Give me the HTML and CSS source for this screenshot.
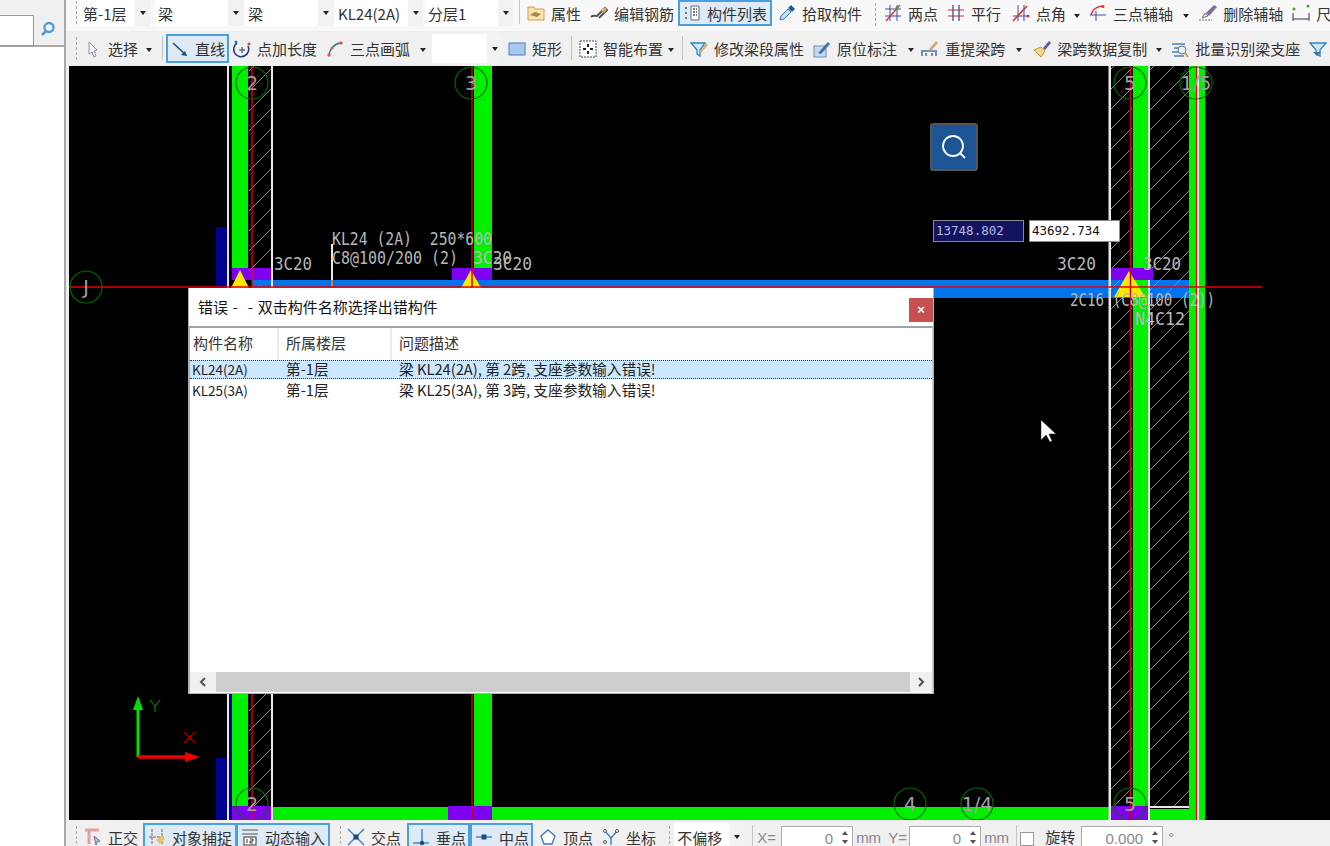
FILE: index.html
```html
<!DOCTYPE html>
<html lang="zh-CN">

<head>
    <meta charset="UTF-8">
    <title>梁 绘图</title>
    <link rel="stylesheet" href="styles.css">
</head>

<body>
    <div class="app">
        <div class="side">
            <div class="searchRow">
                <div class="searchInput"></div>
                <div class="searchBtn">
                    <svg width="18" height="18" viewBox="0 0 18 18"><circle cx="10" cy="7.500" r="4.500" fill="none" stroke="#4f9fe0" stroke-width="2.400"/><path d="M7 11l-4 4" stroke="#4f9fe0" stroke-width="2.600"/></svg>
                </div>
            </div>
        </div>

        <div class="main">
            <div class="bar barTop">
                <i class="grip gripCombos"></i>
                <div class="combo comboFloor"><span>第-1层</span><b><i class="caret"></i></b></div>
                <div class="combo"><span>梁</span><b><i class="caret"></i></b></div>
                <div class="combo"><span>梁</span><b><i class="caret"></i></b></div>
                <div class="combo"><span>KL24(2A)</span><b><i class="caret"></i></b></div>
                <div class="combo"><span>分层1</span><b><i class="caret"></i></b></div>
                <i class="sep sepAttr"></i>
                <div class="tool">
                    <svg class="icon" viewBox="0 0 18 18"><path d="M1 3h6l1 2h9v11H1z" fill="#f6e3b4" stroke="#d99a4a"/><path d="M3 11l5-3 6 2-4 3z" fill="#a98a3a"/></svg>
                    <span>属性</span>
                </div>
                <div class="tool">
                    <svg class="icon" viewBox="0 0 18 18"><path d="M1 13c2-2 4-1 6-1l8-8 2 2-8 8" fill="none" stroke="#555" stroke-width="2"/><path d="M11 6l3-3 3 2-3 4z" fill="#d8b070"/></svg>
                    <span>编辑钢筋</span>
                </div>
                <div class="tool toolOn">
                    <svg class="icon" viewBox="0 0 18 18"><path d="M8 2h8v14H8z" fill="#fff" stroke="#667"/><path d="M10 5h4M10 8h4M10 11h4M2 4h3M2 9h3M2 14h3" stroke="#456" stroke-width="1.500" stroke-dasharray="2 1"/></svg>
                    <span>构件列表</span>
                </div>
                <div class="tool toolPick">
                    <svg class="icon" viewBox="0 0 18 18"><path d="M2 16l1-4 7-7 3 3-7 7z" fill="#bfe0f5" stroke="#3579b8"/><path d="M10 4l3-3 4 4-3 3z" fill="#26588f"/></svg>
                    <span>拾取构件</span>
                </div>
                <i class="grip gripAxis"></i>
                <div class="tool">
                    <svg class="icon" viewBox="0 0 18 18"><path d="M1 5h16M1 12h16" stroke="#3d4f9a"/><path d="M6 1v16M13 1v16" stroke="#3d4f9a"/><path d="M2 17L16 1" stroke="#d33" stroke-width="1.300"/><circle cx="13" cy="4" r="1.500" fill="#3a3"/></svg>
                    <span>两点</span>
                </div>
                <div class="tool">
                    <svg class="icon" viewBox="0 0 18 18"><path d="M1 6h16M1 12h16" stroke="#c33"/><path d="M6 1v16M12 1v16" stroke="#3d4f9a" stroke-width="1.300"/></svg>
                    <span>平行</span>
                </div>
                <div class="tool toolAngle">
                    <svg class="icon" viewBox="0 0 18 18"><path d="M1 12h14M6 1v16M12 1v16" stroke="#3d4f9a"/><path d="M1 17L15 2" stroke="#d33" stroke-width="1.600"/><circle cx="16" cy="12" r="1.500" fill="#d33"/></svg>
                    <span>点角</span>
                </div>
                <i class="caret caretTool"></i>
                <div class="tool">
                    <svg class="icon" viewBox="0 0 18 18"><path d="M1 11h16M7 7v10" stroke="#3d4f9a"/><path d="M2 11c1-5 5-8 11-9" fill="none" stroke="#d33" stroke-width="1.500"/><circle cx="14" cy="2.500" r="1.500" fill="#d33"/></svg>
                    <span>三点辅轴</span>
                </div>
                <i class="caret caretAxis"></i>
                <div class="tool">
                    <svg class="icon" viewBox="0 0 18 18"><path d="M0 16h13" stroke="#678" stroke-dasharray="2 1"/><path d="M3 14l3-5 3 3z" fill="#f2e6c8" stroke="#777"/><path d="M7 9l8-8 3 2-8 9z" fill="#7d6ba0"/></svg>
                    <span>删除辅轴</span>
                </div>
                <div class="tool">
                    <svg class="icon" viewBox="0 0 18 18"><path d="M1 9v8M17 9v8M1 15h16" stroke="#334"/><circle cx="2" cy="5" r="1.500" fill="#3a3"/><circle cx="16" cy="2" r="1.500" fill="#3a3"/></svg>
                    <span>尺</span>
                </div>
            </div>

            <div class="bar barDraw">
                <i class="grip gripSelect"></i>
                <div class="tool">
                    <svg class="icon" viewBox="0 0 18 18"><path d="M5 2l8 8-3 1 2 5-2 1-2-5-3 2z" fill="#f4f6fa" stroke="#8a93a8"/></svg>
                    <span>选择</span>
                </div>
                <i class="caret caretTool"></i>
                <i class="sep sepLine"></i>
                <div class="tool toolOn toolLine">
                    <svg class="icon" viewBox="0 0 18 18"><path d="M2 3l13 12" stroke="#16507e" stroke-width="1.600"/><path d="M16 16l-6-1 4-4z" fill="#16507e"/></svg>
                    <span>直线</span>
                </div>
                <div class="tool">
                    <svg class="icon" viewBox="0 0 18 18"><path d="M4 3a7.500 7.500 0 1 0 11 3" fill="none" stroke="#23406e" stroke-width="1.600"/><path d="M6 10h6M9 7v6" stroke="#23406e"/><circle cx="3" cy="2" r="1.500" fill="#2a7abf"/><circle cx="16" cy="4" r="1.500" fill="#d44"/></svg>
                    <span>点加长度</span>
                </div>
                <div class="tool">
                    <svg class="icon" viewBox="0 0 18 18"><path d="M3 16c0-6 5-12 11-13" fill="none" stroke="#2d7a8f" stroke-width="1.500"/><circle cx="3" cy="15" r="1.700" fill="#d8604a"/><circle cx="6" cy="8" r="1.500" fill="#d8604a"/><circle cx="15" cy="3" r="1.700" fill="#d8604a"/></svg>
                    <span>三点画弧</span>
                </div>
                <i class="caret caretArc"></i>
                <div class="combo comboShape"><span></span><b><i class="caret"></i></b></div>
                <div class="tool">
                    <svg class="icon" viewBox="0 0 18 18"><rect x="1" y="3" width="16" height="12" fill="#a9c8f0" stroke="#4a7fc8"/></svg>
                    <span>矩形</span>
                </div>
                <i class="sep sepSmart"></i>
                <div class="tool">
                    <svg class="icon" viewBox="0 0 18 18"><rect x="1" y="1" width="16" height="16" fill="#fff" stroke="#445" stroke-dasharray="2 1"/><path d="M9 4v3M9 11v3M4 9h3M11 9h3" stroke="#222" stroke-width="2"/></svg>
                    <span>智能布置</span>
                </div>
                <i class="caret caretTight"></i>
                <i class="sep sepBeam"></i>
                <div class="tool">
                    <svg class="icon" viewBox="0 0 18 18"><path d="M1 3h14l-5 7v6l-3-2v-4z" fill="#cfe6f7" stroke="#2e86c1" stroke-width="1.300"/><path d="M9 12l7-9 2 2-7 8z" fill="#d8b070"/></svg>
                    <span>修改梁段属性</span>
                </div>
                <div class="tool">
                    <svg class="icon" viewBox="0 0 18 18"><rect x="1" y="6" width="12" height="11" fill="#c6d8ec" stroke="#6e8db0"/><path d="M5 13L15 2l2 2-9 10z" fill="#3a72b8"/></svg>
                    <span>原位标注</span>
                </div>
                <i class="caret caretMark"></i>
                <div class="tool">
                    <svg class="icon" viewBox="0 0 18 18"><path d="M1 16v-5h14v5M5 16v-3M11 16v-3" fill="none" stroke="#6b93c4" stroke-width="2"/><path d="M8 9l7-8 2 2-7 8z" fill="#d8a878"/></svg>
                    <span>重提梁跨</span>
                </div>
                <i class="caret caretSpan"></i>
                <div class="tool">
                    <svg class="icon" viewBox="0 0 18 18"><path d="M1 10l7-3 4 4-4 6z" fill="#efd98a" stroke="#b79a46"/><path d="M10 8l6-7 2 2-6 7z" fill="#5c5f9e"/></svg>
                    <span>梁跨数据复制</span>
                </div>
                <i class="caret caretCopy"></i>
                <div class="tool">
                    <svg class="icon" viewBox="0 0 18 18"><path d="M1 4h13M3 8h8M1 12h8M3 16h10" stroke="#3f86c6" stroke-width="1.500"/><circle cx="11" cy="10" r="4" fill="#e9edf0" stroke="#777"/><path d="M14 13l3 4" stroke="#c9a24a" stroke-width="2"/></svg>
                    <span>批量识别梁支座</span>
                </div>
                <div class="tool">
                    <svg class="icon" viewBox="0 0 18 18"><path d="M1 3h16l-6 7v6l-4-2v-4z" fill="#cfe6f7" stroke="#2e86c1" stroke-width="1.300"/><path d="M4 12h8l-4 4z" fill="#3a72b8"/></svg>
                </div>
            </div>

            <div class="canvas">
                <svg class="drawing" width="1261" height="754" viewBox="69 66 1261 754">
                    <defs>
                        <pattern id="hatch" patternUnits="userSpaceOnUse" width="20" height="20">
                            <path d="M0 20L20 0" stroke="#8c8c8c" stroke-width="1"/>
                        </pattern>
                    </defs>

                    <!-- beam along axis J -->
                    <rect x="252" y="280" width="953" height="18" fill="#0074ec"/>
                    <rect x="273" y="807" width="836" height="13" fill="#00f000"/>

                    <!-- hatched walls -->
                    <rect x="249" y="66" width="22" height="215" fill="url(#hatch)"/>
                    <rect x="249" y="694" width="22" height="113" fill="url(#hatch)"/>
                    <rect x="1110" y="66" width="22" height="740" fill="url(#hatch)"/>
                    <rect x="1150" y="66" width="39" height="740" fill="url(#hatch)"/>

                    <!-- columns -->
                    <rect x="216" y="227" width="11" height="60" fill="#000090"/>
                    <rect x="216" y="758" width="11" height="62" fill="#000090"/>
                    <rect x="229" y="694" width="2" height="126" fill="#000090"/>
                    <rect x="232" y="66" width="16" height="202" fill="#00f000"/>
                    <rect x="232" y="694" width="16" height="113" fill="#00f000"/>
                    <rect x="474" y="66" width="18" height="202" fill="#00f000"/>
                    <rect x="474" y="694" width="18" height="113" fill="#00f000"/>
                    <rect x="1133" y="66" width="15" height="754" fill="#00f000"/>
                    <rect x="1189" y="66" width="16" height="754" fill="#00f000"/>
                    <rect x="1150" y="809" width="39" height="11" fill="#00f000"/>

                    <!-- wall faces -->
                    <rect x="227" y="66" width="2" height="222" fill="#e8e8e8"/>
                    <rect x="227" y="694" width="2" height="126" fill="#e8e8e8"/>
                    <rect x="271" y="66" width="2" height="222" fill="#e8e8e8"/>
                    <rect x="271" y="694" width="2" height="126" fill="#e8e8e8"/>
                    <rect x="1108.500" y="66" width="2.500" height="754" fill="#e8e8e8"/>
                    <rect x="1148" y="66" width="2" height="754" fill="#e8e8e8"/>
                    <rect x="1197" y="66" width="2" height="754" fill="#f4f4f4"/>
                    <rect x="1150" y="806" width="39" height="2" fill="#e8e8e8"/>
                    <rect x="331" y="244" width="2" height="36" fill="#e8e8e8"/>
                    <rect x="331" y="280" width="2" height="7" fill="#d87a30"/>

                    <!-- column caps -->
                    <rect x="232" y="268" width="39" height="12" fill="#8000f0"/>
                    <rect x="452" y="268" width="40" height="12" fill="#8000f0"/>
                    <rect x="1111" y="268" width="42" height="12" fill="#8000f0"/>
                    <rect x="232" y="806" width="39" height="14" fill="#8000f0"/>
                    <rect x="448" y="806" width="44" height="14" fill="#8000f0"/>
                    <rect x="1111" y="806" width="37" height="14" fill="#8000f0"/>

                    <!-- supports -->
                    <path d="M240 270L231 288H249z" fill="#ffe800"/>
                    <path d="M471 270L461 288H481z" fill="#ffe800"/>
                    <path d="M1129 271L1114 297H1145z" fill="#ffe800"/>

                    <!-- axis lines -->
                    <path d="M252 66V288M252 694V820M1196.500 66V820" stroke="#f00000" stroke-width="1.300"/>
                    <path d="M472 66V288M472 694V820M1130.500 66V820" stroke="#c80018" stroke-width="1.500"/>
                    <path d="M69 287H1262" stroke="#e80000" stroke-width="1.300"/>

                    <!-- axis bubbles -->
                    <g class="bubble">
                        <circle cx="252" cy="83" r="16"/>
                        <circle cx="471" cy="83" r="16"/>
                        <circle cx="1130" cy="83" r="16"/>
                        <circle cx="1196" cy="83" r="16"/>
                        <circle cx="86" cy="287" r="16"/>
                        <circle cx="252" cy="804" r="16"/>
                        <circle cx="910" cy="804" r="16"/>
                        <circle cx="977" cy="804" r="16"/>
                        <circle cx="1130" cy="804" r="16"/>
                    </g>
                    <g class="axisLabel">
                        <text x="252" y="90">2</text>
                        <text x="471" y="90">3</text>
                        <text x="1130" y="90">5</text>
                        <text x="1196" y="90">1/5</text>
                        <text x="86" y="294">J</text>
                        <text x="252" y="811">2</text>
                        <text x="910" y="811">4</text>
                        <text x="977" y="811">1/4</text>
                        <text x="1130" y="811">5</text>
                    </g>

                    <!-- rebar notes -->
                    <g class="note">
                        <text x="332" y="245" textLength="160" lengthAdjust="spacingAndGlyphs">KL24 (2A)  250*600</text>
                        <text x="332" y="264" textLength="126" lengthAdjust="spacingAndGlyphs">C8@100/200 (2)</text>
                        <text x="274" y="270" textLength="38" lengthAdjust="spacingAndGlyphs">3C20</text>
                        <text x="473" y="264" textLength="39" lengthAdjust="spacingAndGlyphs">3C20</text>
                        <text x="493" y="270" textLength="39" lengthAdjust="spacingAndGlyphs">3C20</text>
                        <text x="1057" y="270" textLength="39" lengthAdjust="spacingAndGlyphs">3C20</text>
                        <text x="1143" y="270" textLength="38" lengthAdjust="spacingAndGlyphs">3C20</text>
                        <text x="1070" y="306" textLength="145" lengthAdjust="spacingAndGlyphs">2C16 (C8@100 (2))</text>
                        <text x="1135" y="325" textLength="50" lengthAdjust="spacingAndGlyphs">N4C12</text>
                    </g>

                    <!-- world axes -->
                    <path d="M138 757V703" stroke="#00e000" stroke-width="3"/>
                    <path d="M138 696l-5 14h10z" fill="#00e000"/>
                    <path d="M138 757H186" stroke="#f00000" stroke-width="3.500"/>
                    <path d="M200 757l-15-5v10z" fill="#f00000"/>
                    <path d="M150 700l5 6 5-6M155 706v6" stroke="#00a000" fill="none"/>
                    <path d="M184 732l11 11M195 732l-11 11" stroke="#c00000"/>

                    <!-- mouse pointer -->
                    <path d="M1041 420v20l5-5 4 7 2-1-3-7h7z" fill="#fff" stroke="#222" stroke-width=".5"/>
                </svg>

                <div class="zoomBtn">
                    <svg width="30" height="30" viewBox="0 0 30 30"><circle cx="14" cy="14" r="10" fill="none" stroke="#fff" stroke-width="1.800"/><path d="M21 21l5 5" stroke="#fff" stroke-width="1.800"/></svg>
                </div>
                <div class="coord coordX">13748.802</div>
                <div class="coord coordY">43692.734</div>

                <div class="dialog">
                    <div class="dialogTitle">
                        <span class="dialogText">错误 -  - 双击构件名称选择出错构件</span>
                        <div class="closeBtn">×</div>
                    </div>
                    <div class="errList">
                        <div class="errHead">
                            <div>构件名称</div>
                            <div>所属楼层</div>
                            <div>问题描述</div>
                        </div>
                        <div class="errRow errRowOn">
                            <div class="errName">KL24(2A)</div>
                            <div>第-1层</div>
                            <div>梁 KL24(2A), 第 2跨, 支座参数输入错误!</div>
                        </div>
                        <div class="errRow">
                            <div class="errName">KL25(3A)</div>
                            <div>第-1层</div>
                            <div>梁 KL25(3A), 第 3跨, 支座参数输入错误!</div>
                        </div>
                        <div class="errFill"></div>
                        <div class="hscroll">
                            <div class="hscrollBtn">
                                <svg width="10" height="10" viewBox="0 0 10 10"><path d="M7 1L3 5l4 4" fill="none" stroke="#505050" stroke-width="2"/></svg>
                            </div>
                            <div class="hscrollThumb"></div>
                            <div class="hscrollBtn">
                                <svg width="10" height="10" viewBox="0 0 10 10"><path d="M3 1l4 4-4 4" fill="none" stroke="#505050" stroke-width="2"/></svg>
                            </div>
                        </div>
                    </div>
                </div>
            </div>

            <div class="bar barStatus">
                <i class="grip gripStatus"></i>
                <div class="tool">
                    <svg class="icon" viewBox="0 0 18 18"><path d="M1 2h14M5 2v14" stroke="#e0a0a0" stroke-width="3"/><path d="M10 8l6 5-3 1-1 3z" fill="#b0b8c4" stroke="#778"/></svg>
                    <span>正交</span>
                </div>
                <div class="tool toolOn">
                    <svg class="icon" viewBox="0 0 18 18"><path d="M4 1v16M14 1v16M1 9h16" stroke="#a05040" stroke-dasharray="3 1"/><path d="M8 12l6-5 3 4-5 5z" fill="#e5c46a"/></svg>
                    <span>对象捕捉</span>
                </div>
                <div class="tool toolOn toolNext">
                    <svg class="icon" viewBox="0 0 18 18"><path d="M1 2h16M1 6h16" stroke="#888" stroke-width="1.500"/><rect x="3" y="9" width="12" height="8" fill="#fff" stroke="#333"/><path d="M6 11v4M9 11h3v2H9v2h3" stroke="#333" fill="none"/></svg>
                    <span>动态输入</span>
                </div>
                <i class="grip gripSnap"></i>
                <div class="tool toolCross">
                    <svg class="icon" viewBox="0 0 18 18"><path d="M1 1l16 16M17 1L1 17" stroke="#3a80c0" stroke-width="1.400"/><rect x="6.500" y="6.500" width="5" height="5" fill="#1c4a80"/></svg>
                    <span>交点</span>
                </div>
                <div class="tool toolOn toolLine">
                    <svg class="icon" viewBox="0 0 18 18"><path d="M1 15h16" stroke="#3a80c0" stroke-width="1.400"/><path d="M10 1v14" stroke="#3a80c0" stroke-width="1.400"/><circle cx="10" cy="15" r="2.200" fill="#1c4a80"/></svg>
                    <span>垂点</span>
                </div>
                <div class="tool toolOn toolLine">
                    <svg class="icon" viewBox="0 0 18 18"><path d="M1 9h16" stroke="#3a80c0" stroke-width="1.400"/><rect x="6.500" y="6.500" width="5" height="5" fill="#1c4a80"/></svg>
                    <span>中点</span>
                </div>
                <div class="tool toolVertex">
                    <svg class="icon" viewBox="0 0 18 18"><path d="M9 2l7 6-3 8H5L2 8z" fill="#fff" stroke="#3a80c0" stroke-width="1.400"/></svg>
                    <span>顶点</span>
                </div>
                <div class="tool">
                    <svg class="icon" viewBox="0 0 18 18"><path d="M3 3l6 7 6-7M9 10v7" fill="none" stroke="#3a80c0" stroke-width="1.400"/><circle cx="3" cy="3" r="1.500" fill="#fff" stroke="#555"/><circle cx="15" cy="3" r="1.500" fill="#fff" stroke="#555"/><circle cx="3" cy="14" r="1.500" fill="#fff" stroke="#555"/></svg>
                    <span>坐标</span>
                </div>
                <i class="grip gripOffset"></i>
                <div class="combo comboOffset"><span>不偏移</span><b><i class="caret"></i></b></div>
                <i class="sep sepOffset"></i>
                <span class="muted mutedX">X=</span>
                <div class="spin spinXY">0<b class="spinArrows"></b></div>
                <span class="muted mutedMm">mm</span>
                <span class="muted mutedY">Y=</span>
                <div class="spin spinXY">0<b class="spinArrows"></b></div>
                <span class="muted mutedMm">mm</span>
                <i class="sep sepCheck"></i>
                <i class="check"></i>
                <span class="rotateLabel">旋转</span>
                <div class="spin spinRotate">0.000<b class="spinArrows"></b></div>
                <span class="muted mutedDeg">°</span>
            </div>
        </div>
    </div>
</body>

</html>
```

FILE: styles.css
```css
html, body {
    margin: 0;
    height: 100%;
    overflow: hidden;
}

body {
    font-family: "Noto Sans CJK SC", sans-serif;
    font-size: 15px;
    color: #333;
    background-color: #f0f0f0;
}

.app {
    display: flex;
    width: 1330px;
    height: 846px;
}

.side {
    width: 64px;
    flex-shrink: 0;
    background-color: #fff;
    border-right: 2px solid #a8a8a8;
}

.searchRow {
    display: flex;
    height: 47px;
    padding-top: 15px;
    box-sizing: border-box;
    background-color: #f0f0f0;
    border-bottom: 2px solid #a8a8a8;
}

.searchInput {
    width: 33px;
    height: 29px;
    background-color: #fff;
    border: 1px solid #999;
    border-left: none;
}

.searchBtn {
    display: flex;
    align-items: center;
    justify-content: center;
    width: 26px;
    height: 28px;
    margin-left: 1px;
}

.main {
    flex: 1;
    min-width: 0;
    display: flex;
    flex-direction: column;
}

.bar {
    display: flex;
    flex-shrink: 0;
    white-space: nowrap;
    overflow: hidden;
}

.barTop {
    height: 31px;
    align-items: flex-start;
    background-color: #f8f8f8;
}

.barTop .tool,
.barTop .combo {
    height: 26px;
}

.barDraw {
    height: 35px;
    padding-top: 3px;
    box-sizing: border-box;
    align-items: flex-start;
    background-color: #f0f0f0;
}

.barDraw .tool,
.barDraw .combo {
    height: 29px;
}

.barStatus {
    height: 26px;
    padding-top: 3px;
    box-sizing: border-box;
    align-items: flex-start;
    overflow: visible;
    background-color: #f0f0f0;
}

.barStatus .tool,
.barStatus .combo {
    height: 28px;
}

.tool {
    display: flex;
    align-items: center;
    gap: 6px;
    padding: 0 4px;
    margin-right: 1px;
    box-sizing: border-box;
    flex-shrink: 0;
}

.icon {
    width: 18px;
    height: 18px;
    flex-shrink: 0;
}

.toolOn {
    padding: 0 3px;
    background-color: #deebf7;
    border: 2px solid #4a9fe0;
    margin-right: 0;
}

.barTop .toolOn {
    margin-left: -1px;
}

.toolLine {
    padding-right: 2px;
}

.toolNext {
    margin-left: -1px;
}

.toolPick {
    margin-left: 2px;
}

.toolAngle {
    margin-left: 2px;
}

.toolCross {
    margin-right: 2px;
}

.toolVertex {
    margin-left: 2px;
}

.grip {
    display: block;
    flex-shrink: 0;
    width: 3px;
    height: 24px;
    margin-top: 2px;
    background-image: radial-gradient(#a8a8a8 1px, transparent 1px);
    background-size: 3px 5px;
}

.gripCombos { margin: 0 2px 0 9px; }
.gripAxis { margin-left: 7px; margin-right: 3px; }
.gripSelect { margin: 2px 2px 0 9px; }
.gripStatus { margin: 2px 2px 0 9px; }
.gripSnap { margin: 2px 1px 0 9px; }
.gripOffset { margin: 2px 3px 0 7px; }

.sep {
    display: block;
    flex-shrink: 0;
    width: 1px;
    height: 24px;
    margin-top: 2px;
    background-color: #c4c4c4;
}

.sepAttr { margin: 0 3px 0 4px; }
.sepLine { margin: 2px 3px 0 6px; }
.sepSmart { margin: 2px 3px 0 4px; }
.sepBeam { margin: 2px 3px 0 8px; }
.sepOffset { margin: 2px 3px 0 8px; }
.sepCheck { margin: 2px 3px 0 5px; }

.caret {
    display: block;
    flex-shrink: 0;
    width: 0;
    height: 0;
    border-left: 3.500px solid transparent;
    border-right: 3.500px solid transparent;
    border-top: 4px solid #222;
}

.caretTool,
.caretArc,
.caretMark,
.caretSpan,
.caretCopy,
.caretAxis,
.caretTight {
    align-self: center;
}

.caretTool { margin: 0 4px 0 3px; }
.barTop .caretTool { margin: 0 5px 0 3px; }
.caretAxis { margin: 0 6px 0 5px; }
.caretArc { margin: 0 4px 0 5px; }
.caretMark { margin: 0 3px 0 6px; }
.caretSpan { margin: 0 7px 0 6px; }
.caretCopy { margin: 0 5px 0 4px; }

.combo {
    display: flex;
    align-items: center;
    justify-content: space-between;
    flex-shrink: 0;
    box-sizing: border-box;
    width: 88px;
    margin-right: 2px;
    padding-left: 3px;
    background-color: #fff;
}

.combo b {
    display: flex;
    align-items: center;
    justify-content: center;
    width: 15px;
    height: 100%;
    background-color: #f2f2f2;
}

.comboFloor {
    width: 70px;
    margin-right: 5px;
}

.comboShape {
    width: 70px;
    margin: 0 2px 0 2px;
}

.comboOffset {
    width: 70px;
    margin-right: 0;
}

.canvas {
    position: relative;
    flex: 1;
    min-height: 0;
    margin-left: 3px;
    background-color: #000;
}

.drawing {
    display: block;
}

.bubble circle {
    fill: none;
    stroke: #006a00;
    stroke-width: 1.200;
}

.axisLabel text {
    font-family: "DejaVu Sans", sans-serif;
    font-size: 19px;
    fill: #a0a0a0;
    text-anchor: middle;
}

.note text {
    font-family: "DejaVu Sans Mono", monospace;
    font-size: 17px;
    fill: #b8b8b8;
    white-space: pre;
}

.zoomBtn {
    position: absolute;
    left: 861px;
    top: 57px;
    display: flex;
    align-items: center;
    justify-content: center;
    width: 48px;
    height: 48px;
    box-sizing: border-box;
    background-color: #1c5596;
    border: 2px solid #555;
    border-radius: 3px;
}

.coord {
    position: absolute;
    top: 154px;
    width: 91px;
    height: 22px;
    box-sizing: border-box;
    padding-left: 2px;
    font-family: "DejaVu Sans Mono", monospace;
    font-size: 12.500px;
    line-height: 20px;
    border: 1px solid #8a8a8a;
}

.coordX {
    left: 864px;
    color: #b8b8e8;
    background-color: #14145e;
}

.coordY {
    left: 960px;
    color: #111;
    background-color: #fff;
}

.dialog {
    position: absolute;
    left: 119px;
    top: 222px;
    display: flex;
    flex-direction: column;
    width: 746px;
    height: 406px;
    box-sizing: border-box;
    background-color: #fff;
    border: 1px solid #b0b0b0;
    border-top: none;
    color: #222;
}

.dialogTitle {
    display: flex;
    align-items: center;
    justify-content: space-between;
    height: 38px;
    flex-shrink: 0;
    padding-left: 9px;
    box-sizing: border-box;
    color: #111;
}

.dialogText {
    white-space: pre;
    word-spacing: 1.500px;
    margin-top: -2px;
}

.closeBtn {
    width: 24px;
    height: 24px;
    margin-top: 6px;
    background-color: #c75050;
    color: #fff;
    text-align: center;
    font-family: "Liberation Sans", sans-serif;
    font-weight: bold;
    font-size: 13px;
    line-height: 24px;
}

.errList {
    flex: 1;
    min-height: 0;
    display: flex;
    flex-direction: column;
    border-top: 2px solid #a0a0a8;
    border-left: 1px solid #b0b0b0;
    border-right: 1px solid #d0d0d0;
    font-size: 14.700px;
}

.errHead,
.errRow {
    display: grid;
    grid-template-columns: 89px 113px 1fr;
}

.errHead {
    height: 32px;
    align-items: center;
    font-size: 15px;
}

.errHead div {
    height: 100%;
    padding-left: 7px;
    line-height: 29px;
    box-sizing: border-box;
    border-right: 2px solid #ececec;
    color: #333;
}

.errHead div:first-child {
    padding-left: 3px;
}

.errHead div:last-child {
    border-right: none;
}

.errRow {
    height: 22px;
    align-items: center;
    line-height: 20px;
}

.errRow div {
    padding-left: 7px;
}

.errRow .errName {
    padding-left: 2px;
    font-size: 13.500px;
}

.errRowOn {
    height: 19px;
    background-color: #cce8ff;
    border-top: 1px dotted #333;
    border-bottom: 1px dotted #333;
    box-sizing: border-box;
}

.errRowOn div {
    margin-top: -2px;
}

.errFill {
    flex: 1;
}

.hscroll {
    display: flex;
    height: 20px;
    margin-bottom: 1px;
    flex-shrink: 0;
    background-color: #f0f0f0;
}

.hscrollBtn {
    display: flex;
    align-items: center;
    justify-content: center;
    width: 26px;
    flex-shrink: 0;
}

.hscrollBtn:last-child {
    width: 22px;
}

.hscrollThumb {
    flex: 1;
    background-color: #cdcdcd;
}

.muted {
    flex-shrink: 0;
    font-family: "Liberation Sans", sans-serif;
    font-size: 15px;
    line-height: 30px;
    color: #888;
}

.mutedX { margin-left: 1px; width: 24px; }
.mutedY { margin-left: 5px; width: 21px; }
.mutedMm { margin-left: 3px; width: 27px; }
.mutedDeg { margin-left: 5px; }

.spin {
    position: relative;
    flex-shrink: 0;
    box-sizing: border-box;
    height: 26px;
    margin-top: 3px;
    padding-right: 19px;
    text-align: right;
    font-family: "Liberation Sans", sans-serif;
    font-size: 15px;
    line-height: 24px;
    color: #888;
    background-color: #fff;
    border: 1px solid #aaa;
}

.spinXY { width: 72px; }
.spinRotate { width: 82px; margin-left: 6px; }

.spinArrows {
    position: absolute;
    right: 4px;
    top: 4px;
    width: 0;
    height: 0;
    border-left: 3.500px solid transparent;
    border-right: 3.500px solid transparent;
    border-bottom: 4px solid #555;
}

.spinArrows::after {
    content: "";
    position: absolute;
    left: -3.500px;
    top: 9px;
    width: 0;
    height: 0;
    border-left: 3.500px solid transparent;
    border-right: 3.500px solid transparent;
    border-top: 4px solid #555;
}

.check {
    display: block;
    flex-shrink: 0;
    width: 12px;
    height: 12px;
    margin-top: 9px;
    background-color: #fff;
    border: 1px solid #999;
}

.rotateLabel {
    flex-shrink: 0;
    margin: 0 0 0 11px;
    line-height: 28px;
}
```
